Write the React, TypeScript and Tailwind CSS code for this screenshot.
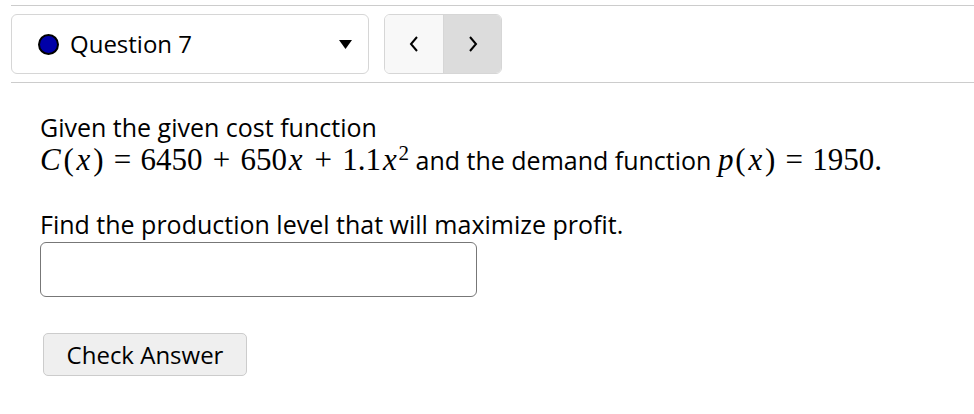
import { useState } from "react";

const sans = { fontFamily: '"Open Sans", "Noto Sans", sans-serif' };
const serif = { fontFamily: '"Liberation Serif", "DejaVu Serif", serif' };

function M({ children }: { children: React.ReactNode }) {
  return (
    <span className="text-[31px] whitespace-nowrap" style={serif}>
      {children}
    </span>
  );
}

// Times italics are narrower than the TeX ones, pad them a bit
function X() {
  return <i className="inline-block px-[0.06em]">x</i>;
}

function Par({ c }: { c: string }) {
  return <span className="inline-block px-[0.03em]">{c}</span>;
}

function Rel({ c }: { c: string }) {
  return <span className="inline-block mx-[0.3em]">{c}</span>;
}

function Bin({ c }: { c: string }) {
  return <span className="inline-block mx-[0.33em]">{c}</span>;
}

export default function App() {
  const [answer, setAnswer] = useState("");

  return (
    <div className="w-[974px] h-[414px] bg-white text-black" style={sans}>
      <div className="pl-[11px] pt-[5px]">
        {/* top bar */}
        <div className="border-t border-b border-[#cccccc] pt-2 pb-2 flex items-center gap-[15px]">
          <div className="w-[358px] h-[60px] border border-[#d6d6d6] rounded-md flex items-center pl-[26px] pr-[16px]">
            <span className="w-[21px] h-[21px] rounded-full bg-[#0000a8] border-2 border-black shrink-0" />
            <span className="ml-[11px] text-[24px] flex-1">Question 7</span>
            <svg width="13" height="9" viewBox="0 0 13 9">
              <path d="M0 0 H13 L6.5 9 Z" fill="black" />
            </svg>
          </div>
          <div className="h-[60px] w-[118px] border border-[#d6d6d6] rounded-md flex overflow-hidden">
            <button className="w-[59px] bg-[#f8f8f8] border-r border-[#d6d6d6] flex items-center justify-center">
              <svg width="10" height="16" viewBox="0 0 10 16">
                <path d="M8 1 L2 8 L8 15" stroke="black" strokeWidth="2" fill="none" />
              </svg>
            </button>
            <button className="flex-1 bg-[#dcdcdc] flex items-center justify-center">
              <svg width="10" height="16" viewBox="0 0 10 16">
                <path d="M2 1 L8 8 L2 15" stroke="black" strokeWidth="2" fill="none" />
              </svg>
            </button>
          </div>
        </div>
      </div>

      <div className="pl-[40px] pt-[28px]">
        <div className="text-[25px] leading-[32px]">Given the given cost function</div>
        <div className="text-[25px] leading-[34px]">
          <M>
            <i className="inline-block pr-[0.06em]">C</i>
            <Par c="(" />
            <X />
            <Par c=")" />
            <Rel c="=" />6450<Bin c="+" />650
            <X />
            <Bin c="+" />1.1
            <X />
            <sup className="text-[21px]">2</sup>
          </M>{" "}
          and the demand function{" "}
          <M>
            <i className="inline-block pr-[0.03em]">p</i>
            <Par c="(" />
            <X />
            <Par c=")" />
            <Rel c="=" />1950.
          </M>
        </div>
        <div className="text-[25px] leading-[32px] mt-[31px]">
          Find the production level that will maximize profit.
        </div>
        <input
          value={answer}
          onChange={(e) => setAnswer(e.target.value)}
          className="mt-[2px] w-[437px] h-[55px] border border-[#777777] rounded-md px-2 text-[20px] outline-none"
        />
        <div className="mt-[36px] pl-[3px]">
          <button className="w-[204px] h-[43px] bg-[#efefef] border border-[#cccccc] rounded-[5px] text-[24px]">
            Check Answer
          </button>
        </div>
      </div>
    </div>
  );
}
